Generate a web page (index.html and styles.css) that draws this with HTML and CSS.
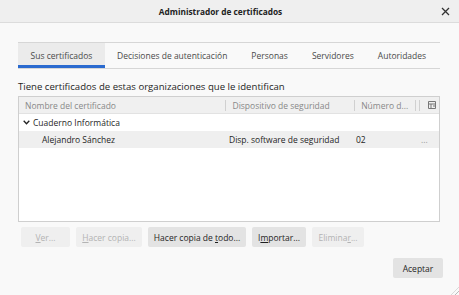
FILE: index.html
```html
<!DOCTYPE html>
<html lang="es">

<head>
  <meta charset="UTF-8" />
  <title>Administrador de certificados</title>
  <link rel="stylesheet" href="styles.css">
</head>

<body>
  <div class="ventana">
    <div class="barra-titulo">
      <span class="titulo">Administrador de certificados</span>
      <span class="cerrar">
        <svg width="9" height="9" viewBox="0 0 9 9"><path d="M1 1L8 8M8 1L1 8" stroke="#333" stroke-width="1.3"/></svg>
      </span>
    </div>

    <div class="contenido">
      <div class="pestanas">
        <div class="pestana activa">Sus certificados</div>
        <div class="pestana">Decisiones de autenticación</div>
        <div class="pestana">Personas</div>
        <div class="pestana">Servidores</div>
        <div class="pestana">Autoridades</div>
      </div>

      <p class="descripcion">Tiene certificados de estas organizaciones que le identifican</p>

      <div class="tabla">
        <div class="fila cabecera">
          <div class="col col-nombre">Nombre del certificado</div>
          <div class="col col-disp">Dispositivo de seguridad</div>
          <div class="col col-num">Número d...</div>
          <div class="col col-icono">
            <svg width="8" height="8" viewBox="0 0 8 8"><path d="M0.5 0.5H7.5V7.5H0.5ZM0.5 3H7.5M3 3V7.5M5 5H7.5" fill="none" stroke="#777" stroke-width="1"/></svg>
          </div>
        </div>
        <div class="fila grupo">
          <div class="col col-nombre">
            <svg class="chevron" width="7" height="5" viewBox="0 0 7 5"><path d="M0.7 0.8L3.5 3.8L6.3 0.8" fill="none" stroke="#222" stroke-width="1.3"/></svg>
            Cuaderno Informática
          </div>
        </div>
        <div class="fila item">
          <div class="col col-nombre sangria">Alejandro Sánchez</div>
          <div class="col col-disp">Disp. software de seguridad</div>
          <div class="col col-num">02</div>
          <div class="col col-icono puntos">...</div>
        </div>
      </div>

      <div class="botones">
        <button class="boton b-ver" disabled><u>V</u>er...</button>
        <button class="boton b-copia" disabled><u>H</u>acer copia...</button>
        <button class="boton b-todo">Hacer copia de <u>t</u>odo...</button>
        <button class="boton b-importar">I<u>m</u>portar...</button>
        <button class="boton b-eliminar" disabled>Elimina<u>r</u>...</button>
      </div>

      <div class="pie">
        <button class="boton">Aceptar</button>
      </div>
    </div>
    <div class="agarre"></div>
  </div>
</body>

</html>
```

FILE: styles.css
```css
body {
  margin: 0;
  font-family: "Open Sans", sans-serif;
  font-size: 8.5px;
  color: #1f1f1f;
  background-color: #f9f9f9;
}

.ventana {
  width: 459px;
  height: 295px;
  position: relative;
  overflow: hidden;
}

.barra-titulo {
  height: 22px;
  background-color: #efefef;
  border-bottom: 1px solid #dcdcdc;
  display: flex;
  align-items: center;
  justify-content: center;
  padding-right: 18px;
  position: relative;
}

.titulo {
  font-weight: 700;
  font-size: 8.3px;
  color: #222;
}

/* boton de cerrar en la esquina */
.cerrar {
  position: absolute;
  right: 9px;
  top: 7px;
  display: flex;
}

.contenido {
  padding: 19px 19px 0 18px;
}

.pestanas {
  display: flex;
  border-top: 1px solid #d6d6d6;
  border-bottom: 1px solid #d6d6d6;
  height: 25px;
}

.pestana {
  display: flex;
  align-items: center;
  padding: 0 12px;
  color: #4a4a4a;
  white-space: nowrap;
  box-sizing: border-box;
}

.pestana.activa {
  background-color: #ebebeb;
  border-bottom: 3px solid #2a6acf;
  padding: 3px 0 0;
  width: 87px;
  justify-content: center;
}

.descripcion {
  margin: 11px 0 3px;
  font-size: 9.6px;
  color: #1f1f1f;
}

.tabla {
  height: 124px;
  border: 1px solid #cfcfcf;
  background-color: #fff;
}

.fila {
  display: flex;
  height: 17px;
  align-items: center;
}

.cabecera {
  height: 16px;
  background-color: #f0f0f0;
  border-bottom: 1px solid #e2e2e2;
  color: #888;
}

.cabecera .col {
  border-right: 1px solid #d0d0d0;
}

.cabecera .col-icono {
  border-right: none;
  border-left: 1px solid #d0d0d0;
  margin-left: 3px;
}

.col {
  box-sizing: border-box;
  padding-left: 6px;
  white-space: nowrap;
  overflow: hidden;
  display: flex;
  align-items: center;
  height: 11px;
}

.col-nombre { width: 208px; }
.col-disp { width: 129px; }
.col-num { width: 61px; }
.col-icono { width: 20px; padding-left: 8px; }

.grupo .col-nombre {
  padding-left: 4px;
  width: auto;
}

.chevron {
  margin-right: 3px;
}

.item {
  background-color: #efefef;
}

.item .col-disp { padding-left: 2px; }
.item .col-num { padding-left: 0; }

.sangria {
  padding-left: 23px;
}

.puntos {
  color: #999;
  padding-left: 4px;
}

.botones {
  display: flex;
  gap: 6px;
  margin: 5px 0 0 3px;
}

.boton {
  font-family: "Open Sans", sans-serif;
  font-size: 8.5px;
  height: 20px;
  padding: 0;
  border: none;
  border-radius: 2px;
  background-color: #e3e3e3;
  color: #1f1f1f;
  white-space: nowrap;
}

.boton:disabled {
  background-color: #efefef;
  color: #b3b3b3;
}

.b-ver { width: 49px; }
.b-copia { width: 66px; }
.b-todo { width: 98px; }
.b-importar { width: 54px; }
.b-eliminar { width: 52px; }

.pie {
  display: flex;
  justify-content: flex-end;
  margin-top: 11px;
}

.pie .boton {
  width: 50px;
  margin-right: -3px;
}

/* marca de redimensionar */
.agarre {
  position: absolute;
  right: 0;
  bottom: 0;
  width: 8px;
  height: 8px;
  background: repeating-linear-gradient(135deg, transparent 0 2px, #bbb 2px 3px);
  clip-path: polygon(100% 0, 100% 100%, 0 100%);
}
```
